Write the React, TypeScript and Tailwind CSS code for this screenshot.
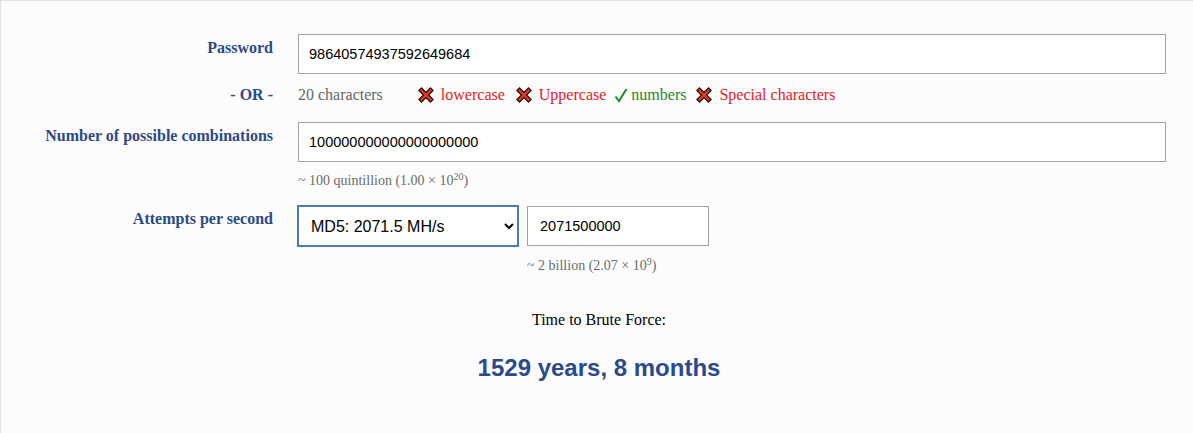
import React from 'react';

function Cross() {
  return (
    <svg width="18" height="18" viewBox="0 0 18 18" className="shrink-0">
      <polygon
        points="2,4.5 4.5,2 9,6.5 13.5,2 16,4.5 11.5,9 16,13.5 13.5,16 9,11.5 4.5,16 2,13.5 6.5,9"
        fill="#f03a1c"
        stroke="#2a1414"
        strokeWidth="1.4"
        strokeLinejoin="miter"
      />
    </svg>
  );
}

function Check() {
  return (
    <svg width="14" height="16" viewBox="0 0 14 16" className="shrink-0">
      <path d="M1.5 9.5 L5 14 L12.5 2" fill="none" stroke="#1f8a2a" strokeWidth="2" />
    </svg>
  );
}

const serif = "font-['Liberation_Serif',_'Times_New_Roman',_serif]";
const sans = "font-['Liberation_Sans',_Arial,_sans-serif]";

export default function App() {
  return (
    <div className={`h-[433px] w-full border-l border-t border-[#e3e3e3] bg-[#fcfcfc] pt-[33px] ${serif}`}>
      <div className="grid grid-cols-[272px_1fr] gap-x-[25px]">
        {/* password */}
        <div className="pt-[2px] text-right text-[16px] font-bold leading-6 text-[#2c4a86]">Password</div>
        <div className="mr-[27px]">
          <input
            type="text"
            readOnly
            value="98640574937592649684"
            className={`h-10 w-full border border-[#9ea3ad] bg-white pl-[10px] text-[14.5px] text-black outline-none ${sans}`}
          />
        </div>

        {/* or */}
        <div className="mt-[9px] text-right text-[16px] font-bold leading-6 text-[#2c4a86]">- OR -</div>
        <div className="mt-[9px] flex items-center text-[16px] leading-6">
          <span className="text-[#666]">20 characters</span>
          <span className="ml-[34px] flex items-center gap-[6px] text-[#e3211f]">
            <Cross />
            lowercase
          </span>
          <span className="ml-[10px] flex items-center gap-[6px] text-[#e3211f]">
            <Cross />
            Uppercase
          </span>
          <span className="ml-[8px] flex items-center gap-[3px] text-[#1f8a2a]">
            <Check />
            numbers
          </span>
          <span className="ml-[9px] flex items-center gap-[6px] text-[#e3211f]">
            <Cross />
            Special characters
          </span>
        </div>

        {/* combinations */}
        <div className="mt-[15px] pt-[2px] text-right text-[16px] font-bold leading-6 text-[#2c4a86]">
          Number of possible combinations
        </div>
        <div className="mt-[15px] mr-[27px]">
          <input
            type="text"
            readOnly
            value="100000000000000000000"
            className={`h-10 w-full border border-[#9ea3ad] bg-white pl-[10px] text-[14.5px] text-black outline-none ${sans}`}
          />
          <div className="mt-[9px] text-[14px] leading-5 text-[#6b6b6b]">
            ~ 100 quintillion (1.00 × 10<sup className="text-[10px]">20</sup>)
          </div>
        </div>

        {/* attempts */}
        <div className="mt-[14px] pt-[2px] text-right text-[16px] font-bold leading-6 text-[#2c4a86]">
          Attempts per second
        </div>
        <div className="mt-[14px]">
          <div className="flex items-center gap-2">
            <select
              defaultValue="md5"
              className={`-ml-px h-[42px] w-[222px] border-2 border-[#4a7bb7] bg-white pl-2 text-[16px] text-black outline-none ${sans}`}
            >
              <option value="md5">MD5: 2071.5 MH/s</option>
            </select>
            <input
              type="text"
              readOnly
              value="2071500000"
              className={`h-10 w-[182px] border border-[#9ea3ad] bg-white pl-3 text-[14.5px] text-black outline-none ${sans}`}
            />
          </div>
          <div className="ml-[229px] mt-[9px] text-[14px] leading-5 text-[#6b6b6b]">
            ~ 2 billion (2.07 × 10<sup className="text-[10px]">9</sup>)
          </div>
        </div>
      </div>

      <div className="mt-[33px] pl-[4px] text-center text-[16px] leading-[22px] text-black">Time to Brute Force:</div>
      <div className={`mt-[21px] pl-[4px] text-center text-[24px] font-bold leading-8 text-[#2b4a8c] ${sans}`}>
        1529 years, 8 months
      </div>
    </div>
  );
}
